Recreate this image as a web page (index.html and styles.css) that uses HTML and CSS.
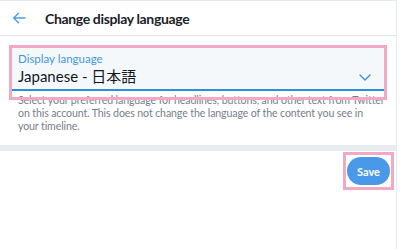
FILE: index.html
```html
<!DOCTYPE html>
<html>
<head>
<meta charset="utf-8">
<link rel="stylesheet" href="styles.css">
</head>
<body>
<div class="page">
  <header class="header">
    <svg class="back" width="14" height="12" viewBox="0 0 14 12"><path d="M13 6H2M6.5 1.2L1.7 6l4.8 4.8" fill="none" stroke="#4a9fe3" stroke-width="1.4" stroke-linecap="round" stroke-linejoin="round"/></svg>
    <h1 class="title">Change display language</h1>
  </header>
  <section class="settings">
    <div class="field">
      <div class="field-label">Display language</div>
      <div class="field-value">Japanese - 日本語</div>
      <svg class="chevron" width="12" height="7" viewBox="0 0 12 7"><path d="M1 1l5 5 5-5" fill="none" stroke="#3d8fd9" stroke-width="1.4" stroke-linecap="round" stroke-linejoin="round"/></svg>
    </div>
    <p class="desc">Select your preferred language for headlines, buttons, and other text from Twitter<br>on this account. This does not change the language of the content you see in<br>your timeline.</p>
  </section>
  <div class="band"></div>
  <div class="actions">
    <div class="save-mark">
      <button class="save">Save</button>
    </div>
  </div>
</div>
</body>
</html>
```
FILE: styles.css
```css
html, body {
  margin: 0;
  padding: 0;
  background: #fff;
}
body {
  font-family: "Lato", "Noto Sans CJK JP", sans-serif;
  color: #14171a;
}
.page {
  width: 397px;
  height: 249px;
  border-top: 1px solid #e6ecf0;
  border-right: 1px solid #e6ecf0;
  box-sizing: border-box;
  overflow: hidden;
}
.header {
  height: 34px;
  border-bottom: 1px solid #e1e6ea;
  display: flex;
  align-items: center;
  padding-left: 12px;
}
.back {
  display: block;
}
.title {
  margin: 0 0 0 19px;
  font-size: 14px;
  font-weight: 700;
  letter-spacing: -0.35px;
  color: #1c2126;
}
.settings {
  padding: 12px 12px 0;
}
.field {
  position: relative;
  background: #f5f8fa;
  border-bottom: 2px solid #2b8fde;
  padding: 4px 6px 0;
  height: 37px;
}
.field::after {
  content: "";
  position: absolute;
  left: -3px;
  top: -3px;
  right: -3px;
  bottom: -11px;
  border: 3px solid #f3a8c6;
}
.field-label {
  font-size: 11.5px;
  line-height: 14px;
  color: #3f97e0;
}
.field-value {
  font-size: 15px;
  line-height: 20px;
  color: #14171a;
}
.chevron {
  position: absolute;
  right: 13px;
  top: 26px;
}
.desc {
  margin: 3px -4px 0 6px;
  font-size: 10.6px;
  letter-spacing: -0.12px;
  line-height: 13px;
  color: #75808a;
  white-space: nowrap;
}
.band {
  margin-top: 12px;
  height: 6px;
  background: #e6ecf0;
}
.actions {
  display: flex;
  justify-content: flex-end;
  padding: 1px 2px 0 0;
}
.save-mark {
  border: 3px solid #f3a8c6;
  padding: 2px 1px 2px 1px;
}
.save {
  display: block;
  font-family: "Lato", sans-serif;
  font-weight: 700;
  font-size: 11px;
  color: #fff;
  background: #4a99e9;
  border: 0;
  border-radius: 14px;
  width: 43px;
  height: 28px;
  padding: 0;
}
```
